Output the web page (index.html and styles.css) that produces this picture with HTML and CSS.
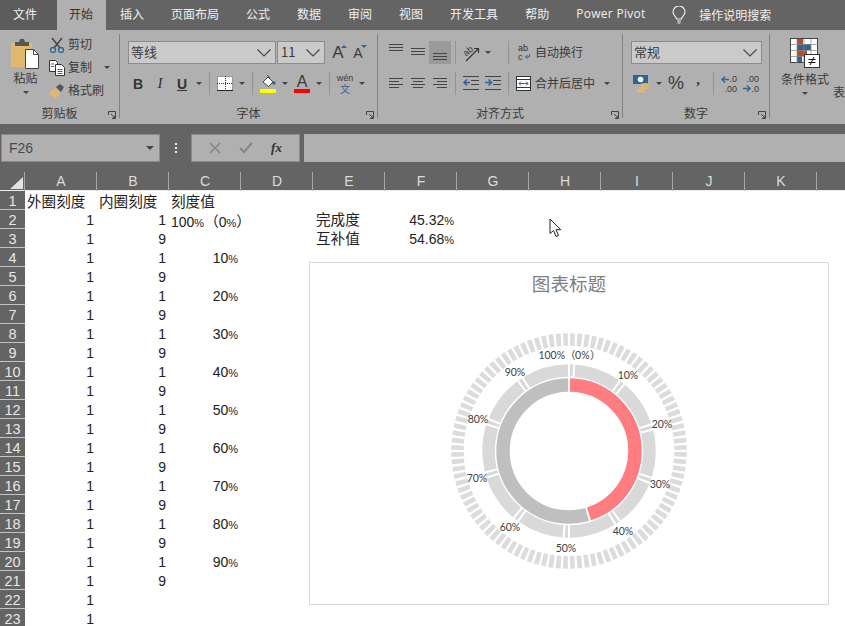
FILE: index.html
```html
<!DOCTYPE html>
<html lang="zh-CN">
<head>
  <meta charset="UTF-8">
  <meta name="viewport" content="width=device-width, initial-scale=1.0">
  <title>图表标题</title>
  <link rel="stylesheet" href="styles.css">
</head>
<body>
  <nav class="tabs">
    <div class="tab tab-file">文件</div>
    <div class="tab tab-active">开始</div>
    <div class="tab">插入</div>
    <div class="tab">页面布局</div>
    <div class="tab">公式</div>
    <div class="tab">数据</div>
    <div class="tab">审阅</div>
    <div class="tab">视图</div>
    <div class="tab">开发工具</div>
    <div class="tab">帮助</div>
    <div class="tab tab-latin">Power Pivot</div>
    <div class="tell-me">
      <svg width="14" height="19" viewBox="0 0 14 19" fill="none" stroke="#f0f0f0" stroke-width="1.1"><path d="M4.5 13c0-2.5-3.5-3.5-3.5-7a6 6 0 0 1 12 0c0 3.500-3.500 4.500-3.500 7z"/><path d="M5 15h4M5.500 17h3"/></svg>
      <span>操作说明搜索</span>
    </div>
  </nav>

  <section class="ribbon">
    <div class="group group-clip">
      <div class="paste">
        <svg width="30" height="31" viewBox="0 0 30 31"><rect x="0" y="5" width="21" height="24" fill="#e0b96f"/><path d="M4 4h4l1-3h4l1 3h4v4H4z" fill="#565656"/><path d="M14.500 11.500h8l5 5v14h-13z" fill="#fff" stroke="#444"/><path d="M22.500 11.500v5h5" fill="none" stroke="#444"/></svg>
        <span>粘贴</span>
        <i class="caret caret-low"></i>
      </div>
      <div class="clip-actions">
        <div class="clip-row">
          <svg width="16" height="16" viewBox="0 0 16 16" fill="none"><path d="M3 1l8 10M13 1L5 11" stroke="#444" stroke-width="1.500"/><circle cx="4" cy="13" r="2.500" stroke="#2f6496" stroke-width="1.300"/><circle cx="12" cy="13" r="2.500" stroke="#2f6496" stroke-width="1.300"/></svg>
          <span>剪切</span>
        </div>
        <div class="clip-row">
          <svg width="16" height="16" viewBox="0 0 16 16" fill="#fff" stroke="#333"><path d="M.5.500h6l2 2v9h-8z"/><path d="M6.500 4.500h6l3 3v8h-9z"/><path d="M2 4h3M2 6.500h3M8.500 9.500h5M8.500 11.500h5M8.500 13.500h5" stroke="#2f6496"/></svg>
          <span>复制</span>
          <i class="caret caret-copy"></i>
        </div>
        <div class="clip-row">
          <svg width="16" height="16" viewBox="0 0 16 16"><path d="M0 10l6-5 5 6-5 5-2-1 1-3-3 1z" fill="#e0b96f"/><path d="M7 4l4-3 4 3-3 5z" fill="#555"/></svg>
          <span>格式刷</span>
        </div>
      </div>
      <div class="group-label">剪贴板</div>
      <svg class="launcher" width="8" height="8" viewBox="0 0 8 8" fill="none" stroke="#444"><path d="M.5 4V.5H7.500V7.500H4M3 3l4 4M7 4.500V7H4.500"/></svg>
    </div>
    <div class="vline"></div>

    <div class="group group-font">
      <div class="tool-row">
        <div class="combo combo-font"><span>等线</span><svg width="14" height="8" viewBox="0 0 14 8" fill="none" stroke="#444" stroke-width="1.100"><path d="M.5.500l6.500 6.500 6.500-6.500"/></svg></div>
        <div class="combo combo-size"><span>11</span><svg width="14" height="8" viewBox="0 0 14 8" fill="none" stroke="#444" stroke-width="1.100"><path d="M.5.500l6.500 6.500 6.500-6.500"/></svg></div>
        <div class="btn btn-grow"><span class="grow-big">A</span><i class="mark"></i></div>
        <div class="btn btn-grow"><span class="grow-small">A</span><i class="mark"></i></div>
      </div>
      <div class="tool-row tool-row-low">
        <div class="btn txt-b">B</div>
        <div class="btn txt-i">I</div>
        <div class="btn txt-u">U</div>
        <i class="caret caret-btn"></i>
        <i class="sep"></i>
        <div class="btn">
          <svg width="16" height="15" viewBox="0 0 16 15"><rect width="16" height="15" fill="#fff"/><path d="M.5.500h15v14H.5zM8.500 0v15M0 7.500h16" fill="none" stroke="#333" stroke-dasharray="1 1"/><path d="M0 14.500h16" stroke="#222"/></svg>
        </div>
        <i class="caret caret-btn"></i>
        <i class="sep"></i>
        <div class="btn">
          <svg width="16" height="19" viewBox="0 0 16 19"><path d="M3 8l5-5 5 5-4.500 4.500z" fill="#fff" stroke="#444"/><path d="M7 1l3 3" stroke="#444"/><circle cx="14" cy="9" r="1.700" fill="#2f6496"/><rect y="15" width="16" height="4" fill="#ffff00"/></svg>
        </div>
        <i class="caret caret-btn"></i>
        <div class="btn btn-color">
          <span>A</span><i class="bar-red"></i>
        </div>
        <i class="caret caret-btn"></i>
        <i class="sep"></i>
        <div class="btn btn-wen"><span class="wen">wén</span><span class="wen-cn">文</span></div>
        <i class="caret caret-btn"></i>
      </div>
      <div class="group-label">字体</div>
      <svg class="launcher" width="8" height="8" viewBox="0 0 8 8" fill="none" stroke="#444"><path d="M.5 4V.5H7.500V7.500H4M3 3l4 4M7 4.500V7H4.500"/></svg>
    </div>
    <div class="vline"></div>

    <div class="group group-align">
      <div class="tool-row">
        <div class="btn"><svg width="14" height="23" viewBox="0 0 14 23" stroke="#444"><path d="M0 3.500h14M0 6.500h14M0 9.500h14"/></svg></div>
        <div class="btn"><svg width="14" height="23" viewBox="0 0 14 23" stroke="#444"><path d="M0 7.500h14M0 10.500h14M0 13.500h14"/></svg></div>
        <div class="btn btn-on"><svg width="14" height="23" viewBox="0 0 14 23" stroke="#444"><path d="M0 12.500h14M0 15.500h14M0 18.500h14"/></svg></div>
        <i class="sep"></i>
        <div class="btn">
          <svg width="20" height="19" viewBox="0 0 20 19" fill="none"><text x="2" y="11" class="mini" transform="rotate(-40 7 8)">ab</text><path d="M5 18L17 6M13 5.500h4.500V10" stroke="#333" stroke-width="1.200"/></svg>
        </div>
        <i class="caret caret-btn"></i>
        <i class="spacer"></i>
        <i class="sep"></i>
        <div class="text-btn text-btn-wrap">
          <svg width="13" height="17" viewBox="0 0 13 17"><text x="0" y="7" class="mini">ab</text><text x="0" y="16" class="mini">c</text><path d="M11.500 10v3H8M9.500 11l-2 2 2 2" fill="none" stroke="#2f6496"/></svg>
          <span>自动换行</span>
        </div>
      </div>
      <div class="tool-row tool-row-low">
        <div class="btn"><svg width="14" height="23" viewBox="0 0 14 23" stroke="#444"><path d="M0 6.500h14M0 9.500h10M0 12.500h14M0 15.500h10"/></svg></div>
        <div class="btn"><svg width="14" height="23" viewBox="0 0 14 23" stroke="#444"><path d="M0 6.500h14M2 9.500h10M0 12.500h14M2 15.500h10"/></svg></div>
        <div class="btn"><svg width="14" height="23" viewBox="0 0 14 23" stroke="#444"><path d="M0 6.500h14M4 9.500h10M0 12.500h14M4 15.500h10"/></svg></div>
        <i class="sep"></i>
        <div class="btn"><svg width="16" height="23" viewBox="0 0 16 23" fill="none"><path d="M0 4.500h16M8 8.500h8M8 12.500h8M0 17.500h16" stroke="#444"/><path d="M7 10.500H1M4 7.500l-3 3 3 3" stroke="#2f6496" stroke-width="1.500"/></svg></div>
        <div class="btn"><svg width="16" height="23" viewBox="0 0 16 23" fill="none"><path d="M0 4.500h16M8 8.500h8M8 12.500h8M0 17.500h16" stroke="#444"/><path d="M0 10.500h6M3.500 7.500l3 3-3 3" stroke="#2f6496" stroke-width="1.500"/></svg></div>
        <i class="sep"></i>
        <div class="text-btn text-btn-merge">
          <svg width="15" height="15" viewBox="0 0 15 15" fill="none"><rect x=".5" y=".5" width="14" height="14" fill="#fff" stroke="#333"/><path d="M0 3.500h15M0 11.500h15" stroke="#333"/><path d="M3 7.500h9M5 5.500l-2 2 2 2M10 5.500l2 2-2 2" stroke="#2f6496"/></svg>
          <span>合并后居中</span>
        </div>
        <i class="caret caret-merge"></i>
      </div>
      <div class="group-label">对齐方式</div>
      <svg class="launcher" width="8" height="8" viewBox="0 0 8 8" fill="none" stroke="#444"><path d="M.5 4V.5H7.500V7.500H4M3 3l4 4M7 4.500V7H4.500"/></svg>
    </div>
    <div class="vline"></div>

    <div class="group group-number">
      <div class="tool-row">
        <div class="combo combo-format"><span>常规</span><svg width="14" height="8" viewBox="0 0 14 8" fill="none" stroke="#444" stroke-width="1.100"><path d="M.5.500l6.500 6.500 6.500-6.500"/></svg></div>
      </div>
      <div class="tool-row tool-row-low">
        <div class="btn">
          <svg width="18" height="18" viewBox="0 0 18 18"><rect y="0" width="15" height="9" fill="#2f6496"/><circle cx="7.500" cy="4.500" r="2.800" fill="#fff"/><ellipse cx="12" cy="10" rx="4.500" ry="2" fill="#e0b96f"/><ellipse cx="10" cy="13" rx="4.500" ry="2" fill="#e0b96f" stroke="#b0b0b0" stroke-width=".6"/><ellipse cx="8" cy="16" rx="4.500" ry="2" fill="#e0b96f" stroke="#b0b0b0" stroke-width=".6"/></svg>
        </div>
        <i class="caret caret-btn"></i>
        <div class="btn txt-percent">%</div>
        <div class="btn txt-comma">,</div>
        <i class="sep"></i>
        <div class="btn btn-decimal">
          <svg width="8" height="7" viewBox="0 0 8 7" fill="none" stroke="#2f6496" stroke-width="1.300"><path d="M8 3.500H1M4 .5l-3 3 3 3"/></svg>
          <span class="dec-top">.0</span><span class="dec-bottom">.00</span>
        </div>
        <div class="btn btn-decimal btn-decimal-less">
          <svg width="8" height="7" viewBox="0 0 8 7" fill="none" stroke="#2f6496" stroke-width="1.300"><path d="M0 3.500h7M4 .5l3 3-3 3"/></svg>
          <span class="dec-top">.00</span><span class="dec-bottom">.0</span>
        </div>
      </div>
      <div class="group-label">数字</div>
      <svg class="launcher" width="8" height="8" viewBox="0 0 8 8" fill="none" stroke="#444"><path d="M.5 4V.5H7.500V7.500H4M3 3l4 4M7 4.500V7H4.500"/></svg>
    </div>
    <div class="vline"></div>

    <div class="group group-styles">
      <div class="cond-format">
        <svg width="30" height="30" viewBox="0 0 30 30"><rect x=".5" y=".5" width="27" height="24" fill="#fff" stroke="#444"/><rect x="7" y="1" width="6" height="5" fill="#c0492c"/><rect x="7" y="6" width="14" height="6" fill="#2f6496"/><rect x="7" y="12" width="10" height="6" fill="#c0492c"/><rect x="7" y="18" width="5" height="6" fill="#2f6496"/><path d="M7 1v24M14 1v24M21 1v24M1 6.500h27M1 12.500h27M1 18.500h27" stroke="#888" stroke-width=".7" fill="none"/><rect x="14.500" y="16.500" width="15" height="13" fill="#fff" stroke="#333"/><path d="M18.500 21.500h7M18.500 24.500h7M24 19l-4 8" stroke="#111" fill="none"/></svg>
        <span>条件格式</span>
        <i class="caret caret-low"></i>
      </div>
      <span class="cut-label">表</span>
    </div>
  </section>

  <section class="formula-bar">
    <div class="name-box"><span>F26</span><i class="caret caret-name"></i></div>
    <div class="dots"><i></i><i></i><i></i></div>
    <div class="fx-buttons">
      <svg width="12" height="12" viewBox="0 0 12 12" stroke="#868686" stroke-width="1.600"><path d="M1 1l10 10M11 1L1 11"/></svg>
      <svg width="14" height="12" viewBox="0 0 14 12" fill="none" stroke="#868686" stroke-width="2"><path d="M1 6l4 4 8-9"/></svg>
      <span class="fx">fx</span>
    </div>
    <div class="fx-input"></div>
  </section>

  <section class="sheet">
    <div class="row row-head">
      <div class="corner"><svg width="13" height="12" viewBox="0 0 13 12"><path d="M13 0v12H0z" fill="#e2e2e2"/></svg></div>
      <div class="ch">A</div><div class="ch">B</div><div class="ch">C</div><div class="ch">D</div><div class="ch">E</div><div class="ch">F</div><div class="ch">G</div><div class="ch">H</div><div class="ch">I</div><div class="ch">J</div><div class="ch">K</div><div class="ch"></div>
    </div>
    <div class="row"><div class="rh">1</div><div class="cell cn">外圈刻度</div><div class="cell cn">内圈刻度</div><div class="cell cn">刻度值</div></div>
    <div class="row"><div class="rh">2</div><div class="cell num">1</div><div class="cell num">1</div><div class="cell cell-mixed">100<span class="pct">%</span><span class="cn">（</span>0<span class="pct">%</span><span class="cn">）</span></div><div class="cell cn col-e">完成度</div><div class="cell num col-f">45.32<span class="pct">%</span></div></div>
    <div class="row"><div class="rh">3</div><div class="cell num">1</div><div class="cell num">9</div><div class="cell"></div><div class="cell cn col-e">互补值</div><div class="cell num col-f">54.68<span class="pct">%</span></div></div>
    <div class="row"><div class="rh">4</div><div class="cell num">1</div><div class="cell num">1</div><div class="cell num">10<span class="pct">%</span></div></div>
    <div class="row"><div class="rh">5</div><div class="cell num">1</div><div class="cell num">9</div></div>
    <div class="row"><div class="rh">6</div><div class="cell num">1</div><div class="cell num">1</div><div class="cell num">20<span class="pct">%</span></div></div>
    <div class="row"><div class="rh">7</div><div class="cell num">1</div><div class="cell num">9</div></div>
    <div class="row"><div class="rh">8</div><div class="cell num">1</div><div class="cell num">1</div><div class="cell num">30<span class="pct">%</span></div></div>
    <div class="row"><div class="rh">9</div><div class="cell num">1</div><div class="cell num">9</div></div>
    <div class="row"><div class="rh">10</div><div class="cell num">1</div><div class="cell num">1</div><div class="cell num">40<span class="pct">%</span></div></div>
    <div class="row"><div class="rh">11</div><div class="cell num">1</div><div class="cell num">9</div></div>
    <div class="row"><div class="rh">12</div><div class="cell num">1</div><div class="cell num">1</div><div class="cell num">50<span class="pct">%</span></div></div>
    <div class="row"><div class="rh">13</div><div class="cell num">1</div><div class="cell num">9</div></div>
    <div class="row"><div class="rh">14</div><div class="cell num">1</div><div class="cell num">1</div><div class="cell num">60<span class="pct">%</span></div></div>
    <div class="row"><div class="rh">15</div><div class="cell num">1</div><div class="cell num">9</div></div>
    <div class="row"><div class="rh">16</div><div class="cell num">1</div><div class="cell num">1</div><div class="cell num">70<span class="pct">%</span></div></div>
    <div class="row"><div class="rh">17</div><div class="cell num">1</div><div class="cell num">9</div></div>
    <div class="row"><div class="rh">18</div><div class="cell num">1</div><div class="cell num">1</div><div class="cell num">80<span class="pct">%</span></div></div>
    <div class="row"><div class="rh">19</div><div class="cell num">1</div><div class="cell num">9</div></div>
    <div class="row"><div class="rh">20</div><div class="cell num">1</div><div class="cell num">1</div><div class="cell num">90<span class="pct">%</span></div></div>
    <div class="row"><div class="rh">21</div><div class="cell num">1</div><div class="cell num">9</div></div>
    <div class="row"><div class="rh">22</div><div class="cell num">1</div></div>
    <div class="row"><div class="rh">23</div><div class="cell num">1</div></div>

    <!-- chart floats over the cells like in the real sheet -->
    <div class="chart">
      <div class="chart-title">图表标题</div>
      <svg class="ring-chart" width="518" height="300" viewBox="0 0 518 300">
        <g transform="rotate(-90 259 147)" fill="none">
          <circle cx="259" cy="147" r="111.500" stroke="#dcdcdc" stroke-width="12.500" pathLength="100" stroke-dasharray="0.66 0.34" stroke-dashoffset="-0.17"/>
          <circle cx="259" cy="147" r="80.500" stroke="#d9d9d9" stroke-width="12.500" pathLength="100" stroke-dasharray="0.6 0.4 8.6 0.4" stroke-dashoffset="-0.2"/>
          <circle cx="259" cy="147" r="66" stroke="#ff7c80" stroke-width="13.400" pathLength="100" stroke-dasharray="44.84 55.16" stroke-dashoffset="-0.24"/>
          <circle cx="259" cy="147" r="66" stroke="#bfbfbf" stroke-width="13.400" pathLength="100" stroke-dasharray="54.2 45.8" stroke-dashoffset="-45.56"/>
        </g>
        <g class="ring-labels" text-anchor="middle">
          <text x="259" y="55">100%（0%）</text>
          <text x="318" y="75">10%</text>
          <text x="352" y="124">20%</text>
          <text x="350" y="184">30%</text>
          <text x="313" y="231">40%</text>
          <text x="256" y="248">50%</text>
          <text x="200" y="227">60%</text>
          <text x="167" y="178">70%</text>
          <text x="168" y="119">80%</text>
          <text x="205" y="72">90%</text>
        </g>
      </svg>
    </div>

    <svg class="pointer" width="14" height="21" viewBox="0 0 14 21"><path d="M1 1v14.500l3.500-3 2.500 6 2.500-1-2.500-5.800h4.800z" fill="#fff" stroke="#222"/></svg>
  </section>
</body>
</html>
```

FILE: styles.css
```css
html, body {
  margin: 0;
  padding: 0;
}

body {
  width: 845px;
  height: 626px;
  overflow: hidden;
  background-color: #646464;
  font-family: "Noto Sans CJK SC", "Liberation Sans", sans-serif;
  font-size: 12px;
  color: #3a3a3a;
}

i {
  font-style: normal;
}

/* tabs */
.tabs {
  display: flex;
  height: 30px;
  color: #f0f0f0;
  line-height: 28px;
}

.tab {
  padding: 0 13px 0 14px;
}

.tab-file {
  width: 57px;
  box-sizing: border-box;
  padding: 0 0 0 13px;
  background-color: #5c5c5c;
}

.tab-active {
  padding: 0 13px 0 12px;
  background-color: #b0b0b0;
  color: #333;
}

.tab-latin {
  font-family: "Open Sans", sans-serif;
  letter-spacing: 0.3px;
  width: 68px;
  white-space: nowrap;
}

.tell-me {
  display: flex;
  align-items: center;
  gap: 13px;
  margin-left: 15px;
}

/* ribbon */
.ribbon {
  display: flex;
  height: 94px;
  background-color: #b0b0b0;
  overflow: hidden;
}

.group {
  position: relative;
  box-sizing: border-box;
  height: 94px;
  flex: none;
}

.vline {
  flex: none;
  width: 1px;
  height: 84px;
  margin-top: 4px;
  background-color: #828282;
}

.group-label {
  position: absolute;
  left: 0;
  right: 0;
  top: 74px;
  height: 18px;
  line-height: 18px;
  text-align: center;
}

.launcher {
  position: absolute;
  right: 3px;
  top: 81px;
}

.group-clip {
  display: flex;
  width: 119px;
}

.group-font {
  width: 257px;
  padding: 11px 0 0 7px;
}

.group-align {
  width: 244px;
  padding: 11px 0 0 7px;
}

.group-number {
  width: 146px;
  padding: 11px 0 0 8px;
}

.group-styles {
  display: flex;
  width: 75px;
}

.paste {
  display: flex;
  flex-direction: column;
  align-items: center;
  width: 47px;
  padding: 8px 0 0 2px;
  flex: none;
}

.paste span {
  line-height: 16px;
  margin-top: 1px;
}

.clip-actions {
  padding-top: 3px;
}

.clip-row {
  display: flex;
  align-items: center;
  gap: 3px;
  height: 23px;
}

.clip-row span,
.text-btn span,
.combo span {
  margin-bottom: 2px;
}

.caret {
  display: block;
  flex: none;
  width: 0;
  height: 0;
  border-left: 3px solid transparent;
  border-right: 3px solid transparent;
  border-top: 3px solid #444;
}

.caret-low {
  margin-top: 5px;
}

.caret-copy {
  margin-left: 9px;
}

.caret-btn {
  margin: 0 3px;
}

.caret-merge {
  margin-left: 9px;
}

.caret-name {
  border-left-width: 4px;
  border-right-width: 4px;
  border-top-width: 4px;
}

.tool-row {
  display: flex;
  align-items: center;
  height: 23px;
}

.tool-row-low {
  margin-top: 8px;
}

.group-font .tool-row:first-child .combo-font {
  margin-left: 1px;
}

.combo {
  display: flex;
  align-items: center;
  justify-content: space-between;
  box-sizing: border-box;
  height: 23px;
  padding: 0 4px 0 2px;
  background-color: #cacaca;
  border: 1px solid #8c8c8c;
  font-size: 13px;
}

.combo-font {
  width: 148px;
}

.combo-size {
  width: 48px;
  margin: 0 3px 0 1px;
  padding-left: 3px;
}

.combo-format {
  width: 131px;
}

.btn {
  display: flex;
  align-items: center;
  justify-content: center;
  position: relative;
  flex: none;
  width: 22px;
  height: 23px;
}

.btn-on {
  background-color: #9a9a9a;
}

.btn-grow {
  width: 20px;
}

.grow-big {
  font: 17px "Liberation Sans", sans-serif;
}

.grow-small {
  font: 14px "Liberation Sans", sans-serif;
}

.mark {
  position: absolute;
  top: 4px;
  right: 1px;
  width: 0;
  height: 0;
  border-left: 3px solid transparent;
  border-right: 3px solid transparent;
  border-bottom: 3px solid #2f6496;
}

.btn-grow + .btn-grow .mark {
  border-bottom: 0;
  border-top: 3px solid #2f6496;
}

.txt-b,
.txt-i,
.txt-u {
  font: 14px "Liberation Sans", sans-serif;
  color: #333;
}

.txt-b {
  font-weight: bold;
}

.txt-i {
  font-style: italic;
  font-family: "Liberation Serif", serif;
  font-size: 15px;
}

.txt-u {
  font-weight: bold;
  text-decoration: underline;
}

.btn-color {
  flex-direction: column;
  font: 16px/15px "Liberation Sans", sans-serif;
}

.bar-red {
  display: block;
  width: 16px;
  height: 4px;
  background-color: #ff0000;
}

.btn-wen {
  flex-direction: column;
}

.wen {
  font: 9px/10px "Liberation Sans", sans-serif;
}

.wen-cn {
  font-size: 10px;
  line-height: 11px;
  color: #2f6496;
}

.sep {
  display: block;
  flex: none;
  width: 1px;
  height: 23px;
  margin: 0 4px;
  background-color: #949494;
}

.spacer {
  display: block;
  flex: none;
  width: 10px;
}

.text-btn {
  display: flex;
  align-items: center;
  gap: 4px;
  font-size: 12px;
}

.text-btn-wrap {
  padding-left: 5px;
}

.text-btn-merge {
  padding-left: 3px;
}

.mini {
  font: 9px "Liberation Sans", sans-serif;
  fill: #333;
}

.txt-percent {
  font: 18px "Liberation Sans", sans-serif;
}

.txt-comma {
  padding-bottom: 8px;
  box-sizing: border-box;
  font: bold 15px "Liberation Serif", serif;
}

.btn-decimal {
  font: 9px/9px "Liberation Sans", sans-serif;
}

.btn-decimal svg {
  position: absolute;
  left: 3px;
  top: 4px;
}

.dec-top,
.dec-bottom {
  position: absolute;
  right: 3px;
}

.dec-top {
  top: 3px;
}

.dec-bottom {
  top: 13px;
}

.btn-decimal-less svg {
  top: 13px;
}

.cond-format {
  display: flex;
  flex-direction: column;
  align-items: center;
  width: 70px;
  padding-top: 8px;
  flex: none;
}

.cond-format span {
  line-height: 16px;
  margin-top: 3px;
}

.cut-label {
  margin: 54px 0 0 -7px;
  line-height: 16px;
}

/* formula bar */
.formula-bar {
  display: flex;
  align-items: stretch;
  height: 28px;
  padding: 10px 0 10px 1px;
}

.name-box {
  display: flex;
  align-items: center;
  justify-content: space-between;
  box-sizing: border-box;
  width: 159px;
  padding: 0 5px 0 7px;
  background-color: #b0b0b0;
  border: 1px solid #8a8a8a;
  font: 14px "Liberation Sans", sans-serif;
  color: #4a4a4a;
}

.dots {
  display: flex;
  flex-direction: column;
  align-items: center;
  justify-content: center;
  gap: 2px;
  width: 31px;
}

.dots i {
  display: block;
  width: 2px;
  height: 2px;
  background-color: #eee;
}

.fx-buttons {
  display: flex;
  align-items: center;
  justify-content: space-around;
  box-sizing: border-box;
  width: 109px;
  padding: 0 8px;
  background-color: #b0b0b0;
  border: 1px solid #8a8a8a;
}

.fx {
  font: italic bold 13px "Liberation Serif", serif;
  color: #333;
}

.fx-input {
  flex: 1;
  margin-left: 4px;
  background-color: #b0b0b0;
}

/* sheet */
.sheet {
  position: relative;
  height: 454px;
  overflow: hidden;
  background-color: #fff;
  font: 14px "Liberation Sans", sans-serif;
  color: #222;
}

.row {
  display: grid;
  grid-template-columns: 25px repeat(11, 72px) 28px;
  height: 19px;
  line-height: 19px;
}

.row-head {
  height: 19px;
  background-color: #646464;
  color: #dcdcdc;
  font-size: 14px;
  border-bottom: 1px solid #eee;
  box-sizing: border-box;
}

.corner {
  display: flex;
  align-items: flex-end;
  justify-content: flex-end;
  padding: 0 2px 2px 0;
}

.ch {
  text-align: center;
  border-left: 1px solid #a8a8a8;
  margin-left: -1px;
}

.rh {
  box-sizing: border-box;
  height: 19px;
  line-height: 21px;
  background-color: #646464;
  border-bottom: 1px solid #c4c4c4;
  color: #e6e6e6;
  font-size: 14.5px;
  text-align: center;
}

.cell {
  padding: 0 3px 0 2px;
  white-space: nowrap;
}

.cn {
  font-family: "Noto Sans CJK SC", sans-serif;
  font-size: 14.6px;
}

.pct {
  font-size: 11px;
}

.num,
.cell-mixed {
  line-height: 21px;
}

.num {
  text-align: right;
}

.col-e {
  grid-column: 6;
  padding-left: 3px;
  line-height: 17px;
}

.col-f {
  grid-column: 7;
}

/* chart */
.chart {
  position: absolute;
  left: 309px;
  top: 90px;
  width: 518px;
  height: 341px;
  background-color: #fff;
  border: 1px solid #d9d9d9;
}

.chart-title {
  height: 41px;
  line-height: 39px;
  text-align: center;
  font-family: "Noto Sans CJK SC", sans-serif;
  font-size: 18.6px;
  color: #7f7f7f;
}

.ring-chart {
  display: block;
}

.ring-labels {
  font-family: Lato, "Liberation Sans", sans-serif;
  font-size: 10.5px;
  fill: #404040;
}

.pointer {
  position: absolute;
  left: 549px;
  top: 46px;
}
```
